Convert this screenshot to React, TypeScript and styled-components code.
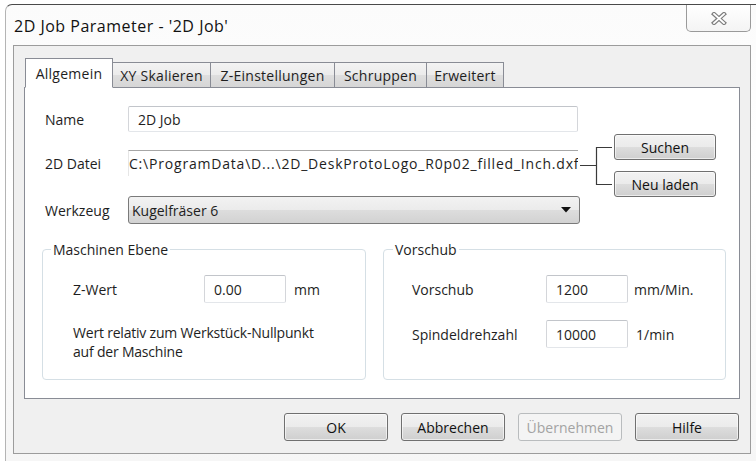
import React from 'react';
import styled, { createGlobalStyle } from 'styled-components';

const GlobalStyle = createGlobalStyle`
  html, body {
    margin: 0;
    padding: 0;
    background: #ffffff;
  }
  body {
    font-family: "Open Sans", "Noto Sans", "DejaVu Sans", sans-serif;
    font-size: 14px;
    color: #1e1e1e;
  }
  * {
    box-sizing: border-box;
  }
`;

// Window frame with the caption bar
const Frame = styled.div`
  margin: 4px 0 0 5px;
  width: 751px;
  height: 457px;
  border-top: 1px solid #4a4a4a;
  border-left: 1px solid #b4b4b4;
  border-top-left-radius: 7px;
  background: linear-gradient(180deg, #fbfbfb 0%, #ffffff 40%, #f6f6f6 100%);
  padding: 0 5px 0 7px;
  display: flex;
  flex-direction: column;
`;

const TitleBar = styled.div`
  height: 40px;
  display: flex;
  justify-content: space-between;
  align-items: flex-start;
`;

const Title = styled.div`
  margin: 11px 0 0 1px;
  font-size: 16px;
  line-height: 20px;
  letter-spacing: 0.5px;
  color: #111;
`;

const CloseButton = styled.div`
  width: 65px;
  height: 27px;
  border: 1px solid #9a9a9a;
  border-top: none;
  border-radius: 0 0 5px 5px;
  background: linear-gradient(180deg, #ffffff 0%, #f4f4f4 100%);
  display: flex;
  align-items: center;
  justify-content: center;
`;

const Client = styled.div`
  height: 409px;
  border: 1px solid #9c9c9c;
  background: #f0f0f0;
  padding: 12px 10px 0 10px;
  display: flex;
  flex-direction: column;
`;

const TabStrip = styled.div`
  height: 29px;
  padding-left: 1px;
  display: flex;
  align-items: flex-end;
  position: relative;
  z-index: 1;
`;

const Tab = styled.div<{ $active?: boolean; $width: number }>`
  width: ${(p) => p.$width}px;
  height: ${(p) => (p.$active ? '30px' : '25px')};
  margin-bottom: ${(p) => (p.$active ? '-1px' : '0')};
  border: 1px solid #898c95;
  border-bottom: ${(p) => (p.$active ? '1px solid #ffffff' : 'none')};
  background: ${(p) =>
    p.$active ? '#ffffff' : 'linear-gradient(180deg, #f3f3f3 0%, #ebebeb 50%, #dedede 51%, #d6d6d6 100%)'};
  display: flex;
  align-items: center;
  justify-content: center;
  letter-spacing: 0.25px;
  white-space: nowrap;
  & + & {
    margin-left: -1px;
  }
`;

const Panel = styled.div`
  height: 312px;
  border: 1px solid #898c95;
  background: #ffffff;
  padding: 18px 13px 0 17px;
`;

const FieldRow = styled.div<{ $height: number; $gap: number }>`
  height: ${(p) => p.$height}px;
  margin-bottom: ${(p) => p.$gap}px;
  padding-left: 3px;
  display: flex;
  align-items: center;
`;

const Label = styled.div<{ $width: number }>`
  width: ${(p) => p.$width}px;
  flex-shrink: 0;
  white-space: nowrap;
`;

const TextBox = styled.input<{ $width: number }>`
  width: ${(p) => p.$width}px;
  height: 100%;
  font: inherit;
  color: #1e1e1e;
  padding: 0 9px;
  border: 1px solid #d4d6da;
  border-top-color: #c2c5ca;
  border-bottom-color: #e3e6ea;
  border-radius: 2px;
  background: #ffffff;
  outline: none;
`;

const PathField = styled.div`
  width: 450px;
  height: 100%;
  flex-shrink: 0;
  border-top: 1px solid #a6a6a6;
  border-left: 1px solid #e6e6e6;
  display: flex;
  align-items: center;
  white-space: nowrap;
  overflow: hidden;
  letter-spacing: 0.8px;
`;

const SideActions = styled.div`
  display: flex;
  align-items: center;
  margin-top: 5px;
  flex-shrink: 0;
`;

const ButtonStack = styled.div`
  display: flex;
  flex-direction: column;
  gap: 11px;
`;

const Button = styled.button<{ $width: number; $height: number }>`
  width: ${(p) => p.$width}px;
  height: ${(p) => p.$height}px;
  font: inherit;
  color: #111;
  padding: 0;
  border: 1px solid #707070;
  border-radius: 3px;
  background: linear-gradient(180deg, #f2f2f2 0%, #ebebeb 50%, #dddddd 51%, #cfcfcf 100%);
  box-shadow: inset 0 0 0 1px rgba(255, 255, 255, 0.6);
  &:disabled {
    color: #a3a3a3;
    border-color: #b9bcbe;
    background: #f4f4f4;
    box-shadow: none;
  }
`;

const Combo = styled.div`
  width: 452px;
  height: 28px;
  padding: 0 8px 0 3px;
  border: 1px solid #7a7a7a;
  border-radius: 3px;
  background: linear-gradient(180deg, #f2f2f2 0%, #ebebeb 50%, #dddddd 51%, #d2d2d2 100%);
  display: flex;
  align-items: center;
  justify-content: space-between;
`;

const GroupRow = styled.div`
  display: flex;
  gap: 17px;
  margin-top: 16px;
`;

const Group = styled.fieldset<{ $width: number; $pad: number }>`
  width: ${(p) => p.$width}px;
  height: 140px;
  margin: 0;
  padding: 16px 0 0 ${(p) => p.$pad}px;
  border: 1px solid #d5dfe5;
  border-radius: 4px;
`;

const Legend = styled.legend<{ $shift: number }>`
  margin-left: ${(p) => p.$shift}px;
  padding: 0 2px;
  line-height: 19px;
`;

const GroupLine = styled.div<{ $gap: number }>`
  height: 28px;
  margin-bottom: ${(p) => p.$gap}px;
  display: flex;
  align-items: center;
`;

const Unit = styled.span<{ $offset: number }>`
  margin-left: ${(p) => p.$offset}px;
`;

const Note = styled.div`
  margin-top: 20px;
  line-height: 19px;
  letter-spacing: -0.2px;
`;

const DialogButtons = styled.div`
  display: flex;
  justify-content: flex-end;
  gap: 13px;
  margin-top: 14px;
  padding-right: 1px;
`;

const CloseGlyph = () => (
  <svg width="16" height="13" viewBox="0 0 16 13">
    <path d="M3 2 L13 11 M13 2 L3 11" stroke="#7d7d7d" strokeWidth="4.2" strokeLinecap="square" />
    <path d="M3 2 L13 11 M13 2 L3 11" stroke="#ffffff" strokeWidth="1.8" strokeLinecap="square" />
  </svg>
);

const Bracket = () => (
  <svg width="36" height="63" viewBox="0 0 36 63">
    <path d="M2 31.5 H18.5 M34 13.5 H18.5 V50.5 H34" fill="none" stroke="#3a3a3a" strokeWidth="1.2" />
  </svg>
);

const DropArrow = () => (
  <svg width="10" height="6" viewBox="0 0 10 6">
    <path d="M0 0 H10 L5 5.5 Z" fill="#111" />
  </svg>
);

const tabs = [
  { label: 'Allgemein', width: 88 },
  { label: 'XY Skalieren', width: 99 },
  { label: 'Z-Einstellungen', width: 125 },
  { label: 'Schruppen', width: 93 },
  { label: 'Erweitert', width: 78 },
];

const App: React.FC = () => {
  return (
    <>
      <GlobalStyle />
      <Frame>
        <TitleBar>
          <Title>2D Job Parameter - '2D Job'</Title>
          <CloseButton>
            <CloseGlyph />
          </CloseButton>
        </TitleBar>

        <Client>
          <TabStrip>
            {tabs.map((t, i) => (
              <Tab key={t.label} $active={i === 0} $width={t.width}>
                {t.label}
              </Tab>
            ))}
          </TabStrip>

          <Panel>
            <FieldRow $height={26} $gap={18}>
              <Label $width={83}>Name</Label>
              <TextBox $width={450} defaultValue="2D Job" />
            </FieldRow>

            <FieldRow $height={26} $gap={20}>
              <Label $width={83}>2D Datei</Label>
              <PathField>C:\ProgramData\D...\2D_DeskProtoLogo_R0p02_filled_Inch.dxf</PathField>
              <SideActions>
                <Bracket />
                <ButtonStack>
                  <Button $width={102} $height={26}>Suchen</Button>
                  <Button $width={102} $height={26}>Neu laden</Button>
                </ButtonStack>
              </SideActions>
            </FieldRow>

            <FieldRow $height={28} $gap={0}>
              <Label $width={83}>Werkzeug</Label>
              <Combo>
                <span>Kugelfräser 6</span>
                <DropArrow />
              </Combo>
            </FieldRow>

            <GroupRow>
              <Group $width={324} $pad={30}>
                <Legend $shift={-22}>Maschinen Ebene</Legend>
                <GroupLine $gap={0}>
                  <Label $width={131}>Z-Wert</Label>
                  <TextBox $width={82} defaultValue="0.00" />
                  <Unit $offset={8}>mm</Unit>
                </GroupLine>
                <Note>
                  Wert relativ zum Werkstück-Nullpunkt
                  <br />
                  auf der Maschine
                </Note>
              </Group>

              <Group $width={343} $pad={28}>
                <Legend $shift={-19}>Vorschub</Legend>
                <GroupLine $gap={17}>
                  <Label $width={134}>Vorschub</Label>
                  <TextBox $width={82} defaultValue="1200" />
                  <Unit $offset={6}>mm/Min.</Unit>
                </GroupLine>
                <GroupLine $gap={0}>
                  <Label $width={134}>Spindeldrehzahl</Label>
                  <TextBox $width={82} defaultValue="10000" />
                  <Unit $offset={8}>1/min</Unit>
                </GroupLine>
              </Group>
            </GroupRow>
          </Panel>

          <DialogButtons>
            <Button $width={104} $height={28}>OK</Button>
            <Button $width={104} $height={28}>Abbrechen</Button>
            <Button $width={104} $height={28} disabled>
              Übernehmen
            </Button>
            <Button $width={104} $height={28}>Hilfe</Button>
          </DialogButtons>
        </Client>
      </Frame>
    </>
  );
};

export default App;
